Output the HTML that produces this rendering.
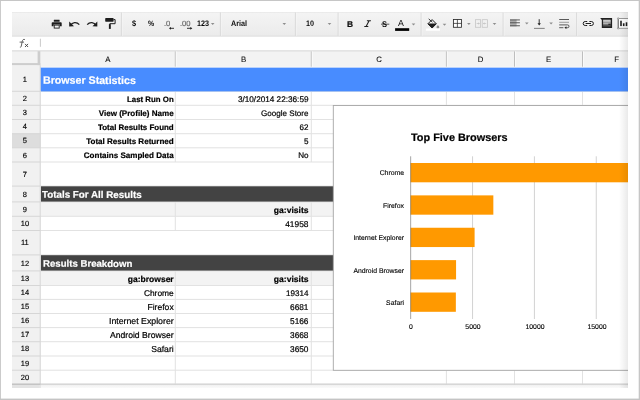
<!DOCTYPE html>
<html><head><meta charset="utf-8"><title>Sheet</title>
<style>
html,body{margin:0;padding:0;}
body{width:640px;height:400px;overflow:hidden;background:#fff;position:relative;font-family:"Liberation Sans",sans-serif;}
#frame{position:absolute;left:0;top:0;}
#c{will-change:transform;position:absolute;left:12px;top:12px;width:616px;height:376px;overflow:hidden;background:#fff;}
#c div,#c svg{position:absolute;}
.t,.rn,.ch,.tb,.cl,.ax{transform:rotate(0.03deg);}
.t{white-space:nowrap;color:#000;font-size:8.2px;line-height:10px;-webkit-text-stroke:0.2px #000;}
.b{font-weight:bold;}
.r{text-align:right;}
.rn{font-size:7.5px;color:#000;text-align:center;line-height:10px;-webkit-text-stroke:0.15px #000;}
.ch{font-size:7.8px;color:#000;text-align:center;line-height:10px;-webkit-text-stroke:0.05px #000;}
.tb{font-size:7.4px;font-weight:bold;color:#0a0a0a;line-height:10px;white-space:nowrap;}
.cl{font-size:6.85px;color:#000;-webkit-text-stroke:0.12px #000;text-align:right;white-space:nowrap;line-height:9px;}
.ax{font-size:6.85px;color:#000;-webkit-text-stroke:0.12px #000;text-align:center;white-space:nowrap;line-height:9px;}
</style></head><body>
<svg id="frame" width="640" height="400" viewBox="0 0 640 400"><rect x="0" y="0" width="640" height="1" fill="#c6c6c6"/><rect x="0" y="0" width="0.9" height="400" fill="#c6c6c6"/><rect x="638.7" y="0" width="1.3" height="400" fill="#c6c6c6"/><rect x="0" y="398.6" width="640" height="1.4" fill="#c4c4c4"/></svg>
<div id="c">
<svg style="left:0;top:0" width="616" height="376" viewBox="12 12 616 376">
<defs><linearGradient id="tg" x1="0" y1="0" x2="0" y2="1"><stop offset="0" stop-color="#f4f4f4"/><stop offset="1" stop-color="#ebebeb"/></linearGradient><linearGradient id="fade" x1="0" y1="0" x2="1" y2="0"><stop offset="0" stop-color="#000" stop-opacity="0"/><stop offset="1" stop-color="#000" stop-opacity="0.085"/></linearGradient><linearGradient id="bs" x1="0" y1="0" x2="0" y2="1"><stop offset="0" stop-color="#f0f0f0"/><stop offset="1" stop-color="#fafafa"/></linearGradient></defs>
<rect x="12" y="12" width="616" height="376" fill="#fff"/>
<rect x="12" y="12" width="616" height="24.5" fill="url(#tg)"/>
<rect x="12" y="12" width="616" height="0.6" fill="#e4e4e4"/>
<rect x="12" y="35.6" width="616" height="0.9" fill="#dedede"/>
<rect x="12" y="50.5" width="616" height="16.8" fill="#f3f3f3"/>
<rect x="12" y="50.4" width="616" height="1.0" fill="#d6d6d6"/>
<rect x="12" y="65.3" width="28.6" height="322.7" fill="#f1f1f1"/>
<rect x="12" y="133.7" width="28.6" height="14.1" fill="#dddddd"/>
<rect x="12" y="63.1" width="28.3" height="2.0" fill="#cdcdcd"/>
<rect x="37.6" y="51.2" width="2.7" height="13.9" fill="#cdcdcd"/>
<rect x="40.6" y="201.9" width="587.4" height="14.4" fill="#f3f3f3"/>
<rect x="40.6" y="270.9" width="587.4" height="14.6" fill="#f3f3f3"/>
<rect x="40.6" y="90.8" width="587.4" height="1.0" fill="#e2e2e2"/>
<rect x="40.6" y="104.8" width="587.4" height="1.0" fill="#e2e2e2"/>
<rect x="40.6" y="119.0" width="587.4" height="1.0" fill="#e2e2e2"/>
<rect x="40.6" y="133.2" width="587.4" height="1.0" fill="#e2e2e2"/>
<rect x="40.6" y="147.3" width="587.4" height="1.0" fill="#e2e2e2"/>
<rect x="40.6" y="161.5" width="587.4" height="1.0" fill="#e2e2e2"/>
<rect x="40.6" y="185.6" width="587.4" height="1.0" fill="#e2e2e2"/>
<rect x="40.6" y="201.4" width="587.4" height="1.0" fill="#e2e2e2"/>
<rect x="40.6" y="215.8" width="587.4" height="1.0" fill="#e2e2e2"/>
<rect x="40.6" y="230.0" width="587.4" height="1.0" fill="#e2e2e2"/>
<rect x="40.6" y="254.4" width="587.4" height="1.0" fill="#e2e2e2"/>
<rect x="40.6" y="270.4" width="587.4" height="1.0" fill="#e2e2e2"/>
<rect x="40.6" y="285.0" width="587.4" height="1.0" fill="#e2e2e2"/>
<rect x="40.6" y="298.9" width="587.4" height="1.0" fill="#e2e2e2"/>
<rect x="40.6" y="313.0" width="587.4" height="1.0" fill="#e2e2e2"/>
<rect x="40.6" y="327.1" width="587.4" height="1.0" fill="#e2e2e2"/>
<rect x="40.6" y="341.2" width="587.4" height="1.0" fill="#e2e2e2"/>
<rect x="40.6" y="355.5" width="587.4" height="1.0" fill="#e2e2e2"/>
<rect x="40.6" y="369.7" width="587.4" height="1.0" fill="#e2e2e2"/>
<rect x="40.6" y="383.7" width="587.4" height="1.0" fill="#e2e2e2"/>
<rect x="174.8" y="91.7" width="1.0" height="70.3" fill="#e2e2e2"/>
<rect x="174.8" y="202.3" width="1.0" height="28.2" fill="#e2e2e2"/>
<rect x="174.8" y="271.3" width="1.0" height="116.7" fill="#e2e2e2"/>
<rect x="310.8" y="91.7" width="1.0" height="70.3" fill="#e2e2e2"/>
<rect x="310.8" y="202.3" width="1.0" height="28.2" fill="#e2e2e2"/>
<rect x="310.8" y="271.3" width="1.0" height="116.7" fill="#e2e2e2"/>
<rect x="445.9" y="91.7" width="1.0" height="94.4" fill="#e2e2e2"/>
<rect x="445.9" y="202.3" width="1.0" height="52.6" fill="#e2e2e2"/>
<rect x="445.9" y="271.3" width="1.0" height="116.7" fill="#e2e2e2"/>
<rect x="514.0" y="91.7" width="1.0" height="94.4" fill="#e2e2e2"/>
<rect x="514.0" y="202.3" width="1.0" height="52.6" fill="#e2e2e2"/>
<rect x="514.0" y="271.3" width="1.0" height="116.7" fill="#e2e2e2"/>
<rect x="582.0" y="91.7" width="1.0" height="94.4" fill="#e2e2e2"/>
<rect x="582.0" y="202.3" width="1.0" height="52.6" fill="#e2e2e2"/>
<rect x="582.0" y="271.3" width="1.0" height="116.7" fill="#e2e2e2"/>
<rect x="40.3" y="67.4" width="587.7" height="24.0" fill="#488cff"/>
<rect x="40.9" y="186.3" width="587.1" height="15.3" fill="#434343"/>
<rect x="40.9" y="255.2" width="587.1" height="15.4" fill="#434343"/>
<rect x="174.8" y="51.4" width="1.0" height="15.9" fill="#bebebe"/>
<rect x="175.8" y="51.4" width="0.9" height="15.5" fill="#fbfbfb"/>
<rect x="310.8" y="51.4" width="1.0" height="15.9" fill="#bebebe"/>
<rect x="311.8" y="51.4" width="0.9" height="15.5" fill="#fbfbfb"/>
<rect x="445.9" y="51.4" width="1.0" height="15.9" fill="#bebebe"/>
<rect x="446.9" y="51.4" width="0.9" height="15.5" fill="#fbfbfb"/>
<rect x="514.0" y="51.4" width="1.0" height="15.9" fill="#bebebe"/>
<rect x="515.0" y="51.4" width="0.9" height="15.5" fill="#fbfbfb"/>
<rect x="582.0" y="51.4" width="1.0" height="15.9" fill="#bebebe"/>
<rect x="583.0" y="51.4" width="0.9" height="15.5" fill="#fbfbfb"/>
<rect x="40.6" y="66.7" width="587.4" height="0.7" fill="#fafafa"/>
<rect x="12" y="90.8" width="28.6" height="1.0" fill="#d6d6d6"/>
<rect x="12" y="104.8" width="28.6" height="1.0" fill="#d6d6d6"/>
<rect x="12" y="119.0" width="28.6" height="1.0" fill="#d6d6d6"/>
<rect x="12" y="133.2" width="28.6" height="1.0" fill="#d6d6d6"/>
<rect x="12" y="147.3" width="28.6" height="1.0" fill="#d6d6d6"/>
<rect x="12" y="161.5" width="28.6" height="1.0" fill="#d6d6d6"/>
<rect x="12" y="185.6" width="28.6" height="1.0" fill="#d6d6d6"/>
<rect x="12" y="201.4" width="28.6" height="1.0" fill="#d6d6d6"/>
<rect x="12" y="215.8" width="28.6" height="1.0" fill="#d6d6d6"/>
<rect x="12" y="230.0" width="28.6" height="1.0" fill="#d6d6d6"/>
<rect x="12" y="254.4" width="28.6" height="1.0" fill="#d6d6d6"/>
<rect x="12" y="270.4" width="28.6" height="1.0" fill="#d6d6d6"/>
<rect x="12" y="285.0" width="28.6" height="1.0" fill="#d6d6d6"/>
<rect x="12" y="298.9" width="28.6" height="1.0" fill="#d6d6d6"/>
<rect x="12" y="313.0" width="28.6" height="1.0" fill="#d6d6d6"/>
<rect x="12" y="327.1" width="28.6" height="1.0" fill="#d6d6d6"/>
<rect x="12" y="341.2" width="28.6" height="1.0" fill="#d6d6d6"/>
<rect x="12" y="355.5" width="28.6" height="1.0" fill="#d6d6d6"/>
<rect x="12" y="369.7" width="28.6" height="1.0" fill="#d6d6d6"/>
<rect x="12" y="383.7" width="28.6" height="1.0" fill="#d6d6d6"/>
<rect x="39.7" y="65.1" width="1.0" height="322.9" fill="#d6d6d6"/>
<rect x="333.3" y="105.5" width="296.7" height="264.8" fill="#fff" stroke="#a6a6a6" stroke-width="0.9"/>
<rect x="472.05" y="156.3" width="1.0" height="162.7" fill="#d2d2d2"/>
<rect x="533.9" y="156.3" width="1.0" height="162.7" fill="#d2d2d2"/>
<rect x="595.75" y="156.3" width="1.0" height="162.7" fill="#d2d2d2"/>
<rect x="410.5" y="163.0" width="239.11" height="19.3" fill="#ff9900"/>
<rect x="410.5" y="195.38" width="82.84" height="19.3" fill="#ff9900"/>
<rect x="410.5" y="227.75" width="64.1" height="19.3" fill="#ff9900"/>
<rect x="410.5" y="260.12" width="45.57" height="19.3" fill="#ff9900"/>
<rect x="410.5" y="292.5" width="45.35" height="19.3" fill="#ff9900"/>
<rect x="410.15" y="156.3" width="1.0" height="162.7" fill="#6a6a6a" opacity="0.6"/>
<g>
<rect x="120.9" y="12.5" width="1" height="23.5" fill="#dadada"/>
<rect x="121.9" y="12.5" width="1" height="23.5" fill="#fafafa" opacity="0.4"/>
<rect x="219.9" y="12.5" width="1" height="23.5" fill="#dadada"/>
<rect x="220.9" y="12.5" width="1" height="23.5" fill="#fafafa" opacity="0.4"/>
<rect x="294.9" y="12.5" width="1" height="23.5" fill="#dadada"/>
<rect x="295.9" y="12.5" width="1" height="23.5" fill="#fafafa" opacity="0.4"/>
<rect x="337.6" y="12.5" width="1" height="23.5" fill="#dadada"/>
<rect x="338.6" y="12.5" width="1" height="23.5" fill="#fafafa" opacity="0.4"/>
<rect x="420.6" y="12.5" width="1" height="23.5" fill="#dadada"/>
<rect x="421.6" y="12.5" width="1" height="23.5" fill="#fafafa" opacity="0.4"/>
<rect x="502.6" y="12.5" width="1" height="23.5" fill="#dadada"/>
<rect x="503.6" y="12.5" width="1" height="23.5" fill="#fafafa" opacity="0.4"/>
<rect x="576.1" y="12.5" width="1" height="23.5" fill="#dadada"/>
<rect x="577.1" y="12.5" width="1" height="23.5" fill="#fafafa" opacity="0.4"/>
<path d="M210.89999999999998 23.0 h3.6 l-1.8 2.1z" fill="#8e8e8e"/>
<path d="M282.5 23.0 h3.6 l-1.8 2.1z" fill="#8e8e8e"/>
<path d="M327.7 23.0 h3.6 l-1.8 2.1z" fill="#8e8e8e"/>
<path d="M411.7 23.5 h3.6 l-1.8 2.1z" fill="#8e8e8e"/>
<path d="M442.7 23.75 h3.6 l-1.8 2.1z" fill="#8e8e8e"/>
<path d="M467.05 22.9 h3.6 l-1.8 2.1z" fill="#8e8e8e"/>
<path d="M492.7 22.9 h3.6 l-1.8 2.1z" fill="#8e8e8e"/>
<path d="M525.0 22.5 h3.6 l-1.8 2.1z" fill="#8e8e8e"/>
<path d="M549.3000000000001 22.5 h3.6 l-1.8 2.1z" fill="#8e8e8e"/>
<g fill="#1e1e1e"><rect x="53.8" y="19.7" width="5.8" height="2.0" rx="0.3"/><path d="M52.6 22.2 h8.2 a0.9 0.9 0 0 1 0.9 0.9 v3.2 h-1.9 v-1.9 h-6.2 v1.9 h-1.9 v-3.2 a0.9 0.9 0 0 1 0.9 -0.9z"/><rect x="54.2" y="25.1" width="5" height="3" fill="none" stroke="#1e1e1e" stroke-width="0.9"/></g>
<path d="M70.6 25.3 C72.2 22.2 76.6 21.6 79.3 24.6" fill="none" stroke="#1e1e1e" stroke-width="1.3"/>
<path d="M69.2 21.4 L69.2 26.4 L74 26.2z" fill="#1e1e1e"/>
<path d="M95.9 25.3 C94.3 22.2 89.9 21.6 87.2 24.6" fill="none" stroke="#1e1e1e" stroke-width="1.3"/>
<path d="M97.3 21.4 L97.3 26.4 L92.5 26.2z" fill="#1e1e1e"/>
<rect x="105.2" y="18.1" width="8.4" height="3.6" rx="0.6" fill="#1e1e1e"/>
<path d="M113.6 19.6 h1.5 v4.1 h-5.3 v1.2" fill="none" stroke="#1e1e1e" stroke-width="1"/>
<rect x="108.9" y="24.2" width="1.9" height="4.7" fill="#1e1e1e"/>
<path d="M169.8 28.3 h4.2" stroke="#1e1e1e" stroke-width="0.9" fill="none"/><path d="M169 28.3 l2 -1.4 v2.8z" fill="#1e1e1e"/>
<path d="M187 28.3 h4.2" stroke="#1e1e1e" stroke-width="0.9" fill="none"/><path d="M192.3 28.3 l-2 -1.4 v2.8z" fill="#1e1e1e"/>
<path d="M366.9 20.7 h4.0 M364.3 26.5 h4.0 M369.1 20.7 L366.1 26.5" stroke="#1e1e1e" stroke-width="1.05" fill="none"/>
<rect x="381" y="23.75" width="8.3" height="0.75" fill="#1e1e1e"/>
<rect x="395.1" y="28.2" width="14.1" height="2.7" fill="#000"/>
<path d="M432.1 19.6 L436.3 23.8 L432.1 28 L427.9 23.8 Z" fill="#f4f4f4" stroke="#1e1e1e" stroke-width="1"/>
<path d="M427.6 23.6 h9 L432.1 28.2z" fill="#1e1e1e"/>
<path d="M428.7 18.9 L432.4 22.2" stroke="#1e1e1e" stroke-width="0.9" fill="none"/>
<path d="M437.9 25 c0.8 1 1.4 1.6 1.4 2.2 a1.4 1.3 0 0 1 -2.8 0 c0 -0.6 0.6 -1.2 1.4 -2.2z" fill="#8a8a8a"/>
<rect x="425.9" y="28.5" width="14.1" height="2.2" fill="#fff"/>
<rect x="453.4" y="19.5" width="8" height="7.8" fill="#fff" stroke="#2a2a2a" stroke-width="0.85"/>
<path d="M457.4 19.5 v7.8 M453.4 23.4 h8" stroke="#2a2a2a" stroke-width="0.75"/>
<g stroke="#c6c6c6" fill="none" stroke-width="0.8"><rect x="475.4" y="19.7" width="5.2" height="7.6"/><rect x="482.2" y="19.7" width="5.2" height="7.6"/><path d="M476.6 23.5 h2.6 M486.2 23.5 h-2.6"/></g>
<path d="M479.8 23.5 l-1.4 -1.2 v2.4z M483 23.5 l1.4 -1.2 v2.4z" fill="#c0c0c0"/>
<g><rect x="510" y="19.6" width="6.6" height="6.8" fill="#ababab"/><rect x="510" y="19.45" width="9.9" height="0.95" fill="#505050"/><rect x="510" y="22.3" width="9.9" height="0.95" fill="#505050"/><rect x="510" y="25.3" width="9.9" height="0.95" fill="#505050"/></g>
<path d="M539.2 19.2 v4.6" stroke="#1e1e1e" stroke-width="0.9"/>
<path d="M537.5 23.3 h3.4 l-1.7 2.3z" fill="#1e1e1e"/>
<rect x="534" y="27.9" width="10.7" height="0.8" fill="#666"/>
<g stroke-width="0.8" fill="none"><path d="M559.2 19.5 h9.8" stroke="#333"/><path d="M559.2 22.3 h9.8" stroke="#888"/><path d="M559.2 24.9 h8.4 a1.4 1.4 0 0 1 0 2.8 h-1.6" stroke="#333"/><path d="M559.2 27.7 h4.2" stroke="#333"/></g>
<path d="M566.4 26.3 v2.8 l-2 -1.4z" fill="#222"/>
<g fill="none" stroke="#1e1e1e" stroke-width="1.0"><path d="M587.2 21.5 h-2 a2 2 0 0 0 0 4 h2"/><path d="M589.4 21.5 h2 a2 2 0 0 1 0 4 h-2"/><path d="M585.6 23.5 h5.4"/></g>
<path d="M600.2 18.1 h11.9 v9.8 h-10.3 v-7.9z" fill="#222"/>
<rect x="603.1" y="19.7" width="7.6" height="2.0" fill="#c9c9c9"/>
<rect x="603.1" y="21.6" width="7.6" height="0.8" fill="#f0f0f0"/>
<rect x="603.1" y="22.4" width="7.6" height="2.3" fill="#b4b4b4"/>
<rect x="603.1" y="24.7" width="7.6" height="1.8" fill="#555"/>
<rect x="608.3" y="23.7" width="2.4" height="1.2" fill="#222"/>
<rect x="618.2" y="18.5" width="14" height="9.8" fill="#fff"/>
<path d="M618.2 18.5 h12 M618.2 28.3 h12" stroke="#8f8f8f" stroke-width="0.9" fill="none"/>
<path d="M618.2 18.3 v10.2" stroke="#4a4a4a" stroke-width="1" fill="none"/>
<rect x="620.2" y="20.7" width="1.6" height="5.4" fill="#1e1e1e"/><rect x="622.9" y="23.3" width="1.6" height="2.8" fill="#1e1e1e"/><rect x="625.7" y="22.3" width="1.6" height="3.8" fill="#1e1e1e"/>
<circle cx="618.2" cy="18.4" r="0.75" fill="#eee" stroke="#777" stroke-width="0.5"/><circle cx="618.2" cy="28.4" r="0.75" fill="#eee" stroke="#777" stroke-width="0.5"/>
<path d="M24.9 39.5 c-1.7 -0.5 -2.4 0.5 -2.7 2.1 l-0.9 4.4 c-0.2 1 -0.6 1.4 -1.4 1.2 M19.6 42.1 h4.4" fill="none" stroke="#505050" stroke-width="0.9"/>
<path d="M25 43.9 l3.1 3.1 M28.1 43.9 l-3.1 3.1" fill="none" stroke="#404040" stroke-width="0.9"/>
<rect x="39.9" y="38.7" width="0.9" height="8.1" fill="#c4c4c4"/>
</g>
<rect x="12" y="384.7" width="27.7" height="3.3" fill="#e3e3e3"/>
<rect x="40.7" y="384.7" width="587.3" height="3.3" fill="url(#bs)"/>
<rect x="12" y="383.6" width="28.6" height="1.2" fill="#bdbdbd"/>
<rect x="40.6" y="383.6" width="587.4" height="1.2" fill="#d2d2d2"/>
<rect x="619" y="12" width="9" height="376" fill="url(#fade)"/>
</svg>
<div class="ch" style="left:29.4px;top:42.75px;width:133.9px;">A</div>
<div class="ch" style="left:164.1px;top:42.75px;width:135.2px;">B</div>
<div class="ch" style="left:300.1px;top:42.75px;width:134.3px;">C</div>
<div class="ch" style="left:435.2px;top:42.75px;width:67.3px;">D</div>
<div class="ch" style="left:503.3px;top:42.75px;width:67.2px;">E</div>
<div class="ch" style="left:571.3px;top:42.75px;width:67.2px;">F</div>
<div class="rn" style="left:0px;top:62.9px;width:25.8px;">1</div>
<div class="rn" style="left:0px;top:81.9px;width:25.8px;">2</div>
<div class="rn" style="left:0px;top:96.0px;width:25.8px;">3</div>
<div class="rn" style="left:0px;top:110.2px;width:25.8px;">4</div>
<div class="rn" style="left:0px;top:124.35px;width:25.8px;">5</div>
<div class="rn" style="left:0px;top:138.5px;width:25.8px;">6</div>
<div class="rn" style="left:0px;top:157.65px;width:25.8px;">7</div>
<div class="rn" style="left:0px;top:177.6px;width:25.8px;">8</div>
<div class="rn" style="left:0px;top:192.7px;width:25.8px;">9</div>
<div class="rn" style="left:0px;top:207.0px;width:25.8px;">10</div>
<div class="rn" style="left:0px;top:226.3px;width:25.8px;">11</div>
<div class="rn" style="left:0px;top:246.5px;width:25.8px;">12</div>
<div class="rn" style="left:0px;top:261.8px;width:25.8px;">13</div>
<div class="rn" style="left:0px;top:276.05px;width:25.8px;">14</div>
<div class="rn" style="left:0px;top:290.05px;width:25.8px;">15</div>
<div class="rn" style="left:0px;top:304.15px;width:25.8px;">16</div>
<div class="rn" style="left:0px;top:318.25px;width:25.8px;">17</div>
<div class="rn" style="left:0px;top:332.45px;width:25.8px;">18</div>
<div class="rn" style="left:0px;top:346.7px;width:25.8px;">19</div>
<div class="rn" style="left:0px;top:360.8px;width:25.8px;">20</div>
<div class="rn" style="left:0px;top:375.2px;width:25.8px;">21</div>
<div class="t b" style="left:30.7px;top:62px;width:585.3px;font-size:10.65px;line-height:12px;color:#fff;-webkit-text-stroke:0.2px #fff;">Browser Statistics</div>
<div class="t r b" style="left:28.6px;top:83px;width:132.7px;font-size:7.85px;line-height:10px;">Last Run On</div>
<div class="t r" style="left:163.3px;top:83px;width:133.5px;font-size:8.2px;line-height:10px;">3/10/2014 22:36:59</div>
<div class="t r b" style="left:28.6px;top:97px;width:132.7px;font-size:8.05px;line-height:10px;">View (Profile) Name</div>
<div class="t r" style="left:163.3px;top:97px;width:133.5px;font-size:8.05px;line-height:10px;">Google Store</div>
<div class="t r b" style="left:28.6px;top:111px;width:132.7px;font-size:7.95px;line-height:10px;">Total Results Found</div>
<div class="t r" style="left:163.3px;top:111px;width:133.5px;font-size:8.0px;line-height:10px;">62</div>
<div class="t r b" style="left:28.6px;top:125px;width:132.7px;font-size:8.05px;line-height:10px;">Total Results Returned</div>
<div class="t r" style="left:163.3px;top:125px;width:133.5px;font-size:8.1px;line-height:10px;">5</div>
<div class="t r b" style="left:28.6px;top:139px;width:132.7px;font-size:8.05px;line-height:10px;">Contains Sampled Data</div>
<div class="t r" style="left:163.3px;top:139px;width:133.5px;font-size:8.1px;line-height:10px;">No</div>
<div class="t b" style="left:30.1px;top:177px;width:585.9px;font-size:9.8px;line-height:12px;color:#fff;-webkit-text-stroke:0.2px #fff;">Totals For All Results</div>
<div class="t r b" style="left:163.3px;top:193px;width:133.5px;font-size:8.55px;line-height:10px;">ga:visits</div>
<div class="t r" style="left:163.3px;top:207px;width:133.5px;font-size:8.4px;line-height:10px;">41958</div>
<div class="t b" style="left:30.7px;top:246px;width:585.3px;font-size:9.65px;line-height:12px;color:#fff;-webkit-text-stroke:0.2px #fff;">Results Breakdown</div>
<div class="t r b" style="left:28.6px;top:262px;width:132.7px;font-size:8.53px;line-height:10px;">ga:browser</div>
<div class="t r b" style="left:163.3px;top:262px;width:133.5px;font-size:8.55px;line-height:10px;">ga:visits</div>
<div class="t r" style="left:28.6px;top:276px;width:132.7px;font-size:8.4px;line-height:10px;">Chrome</div>
<div class="t r" style="left:163.3px;top:277px;width:133.5px;font-size:8.1px;line-height:10px;">19314</div>
<div class="t r" style="left:28.6px;top:290px;width:132.7px;font-size:8.6px;line-height:10px;">Firefox</div>
<div class="t r" style="left:163.3px;top:290px;width:133.5px;font-size:8.3px;line-height:10px;">6681</div>
<div class="t r" style="left:28.6px;top:304px;width:132.7px;font-size:8.75px;line-height:10px;">Internet Explorer</div>
<div class="t r" style="left:163.3px;top:304px;width:133.5px;font-size:8.3px;line-height:10px;">5166</div>
<div class="t r" style="left:28.6px;top:318px;width:132.7px;font-size:8.63px;line-height:10px;">Android Browser</div>
<div class="t r" style="left:163.3px;top:318px;width:133.5px;font-size:8.3px;line-height:10px;">3668</div>
<div class="t r" style="left:28.6px;top:332px;width:132.7px;font-size:8.62px;line-height:10px;">Safari</div>
<div class="t r" style="left:163.3px;top:332px;width:133.5px;font-size:8.3px;line-height:10px;">3650</div>
<div class="t b" style="left:399.0px;top:119px;width:129.0px;font-size:10.9px;line-height:12px;">Top Five Browsers</div>
<div class="cl" style="left:328px;top:156px;width:64.0px;font-size:6.85px;line-height:9px;">Chrome</div>
<div class="cl" style="left:328px;top:189px;width:64.0px;font-size:6.85px;line-height:9px;">Firefox</div>
<div class="cl" style="left:328px;top:221px;width:64.0px;font-size:6.85px;line-height:9px;">Internet Explorer</div>
<div class="cl" style="left:328px;top:254px;width:64.0px;font-size:6.85px;line-height:9px;">Android Browser</div>
<div class="cl" style="left:328px;top:286px;width:64.0px;font-size:6.85px;line-height:9px;">Safari</div>
<div class="ax" style="left:378.7px;top:310px;width:40.0px;font-size:6.85px;line-height:9px;">0</div>
<div class="ax" style="left:440.55px;top:310px;width:40.0px;font-size:6.85px;line-height:9px;">5000</div>
<div class="ax" style="left:503.3px;top:310px;width:40.0px;font-size:6.85px;line-height:9px;">10000</div>
<div class="ax" style="left:565.15px;top:310px;width:40.0px;font-size:6.85px;line-height:9px;">15000</div>
<div class="tb" style="left:119.7px;top:6.8px;font-size:8px;transform:rotate(0.03deg) scaleX(0.92);transform-origin:0 50%;">$</div>
<div class="tb" style="left:135.9px;top:6.6px;font-size:7.8px;transform:rotate(0.03deg) scaleX(0.88);transform-origin:0 50%;">%</div>
<div class="tb" style="left:151.6px;top:7px;color:#666;-webkit-text-stroke:0.15px #666;font-weight:normal;font-size:7.6px;">.0</div>
<div class="tb" style="left:168.2px;top:7px;color:#666;-webkit-text-stroke:0.15px #666;font-weight:normal;font-size:7.6px;">.00</div>
<div class="tb" style="left:184.7px;top:6.8px;font-size:8px;transform:rotate(0.03deg) scaleX(0.9);transform-origin:0 50%;">123</div>
<div class="tb" style="left:219.4px;top:6.8px;font-size:8px;transform:rotate(0.03deg) scaleX(0.9);transform-origin:0 50%;">Arial</div>
<div class="tb" style="left:293.8px;top:6.8px;font-size:8px;transform:rotate(0.03deg) scaleX(0.9);transform-origin:0 50%;">10</div>
<div class="tb" style="left:334.8px;top:6.5px;font-size:8.4px;-webkit-text-stroke:0.2px #111;">B</div>
<div class="tb" style="left:370.3px;top:6.7px;font-size:8.4px;font-weight:bold;transform:rotate(0.03deg) scaleX(0.9);transform-origin:0 50%;">S</div>
<div class="tb" style="left:386.4px;top:5.6px;font-size:8.8px;font-weight:normal;">A</div>
</div></body></html>
